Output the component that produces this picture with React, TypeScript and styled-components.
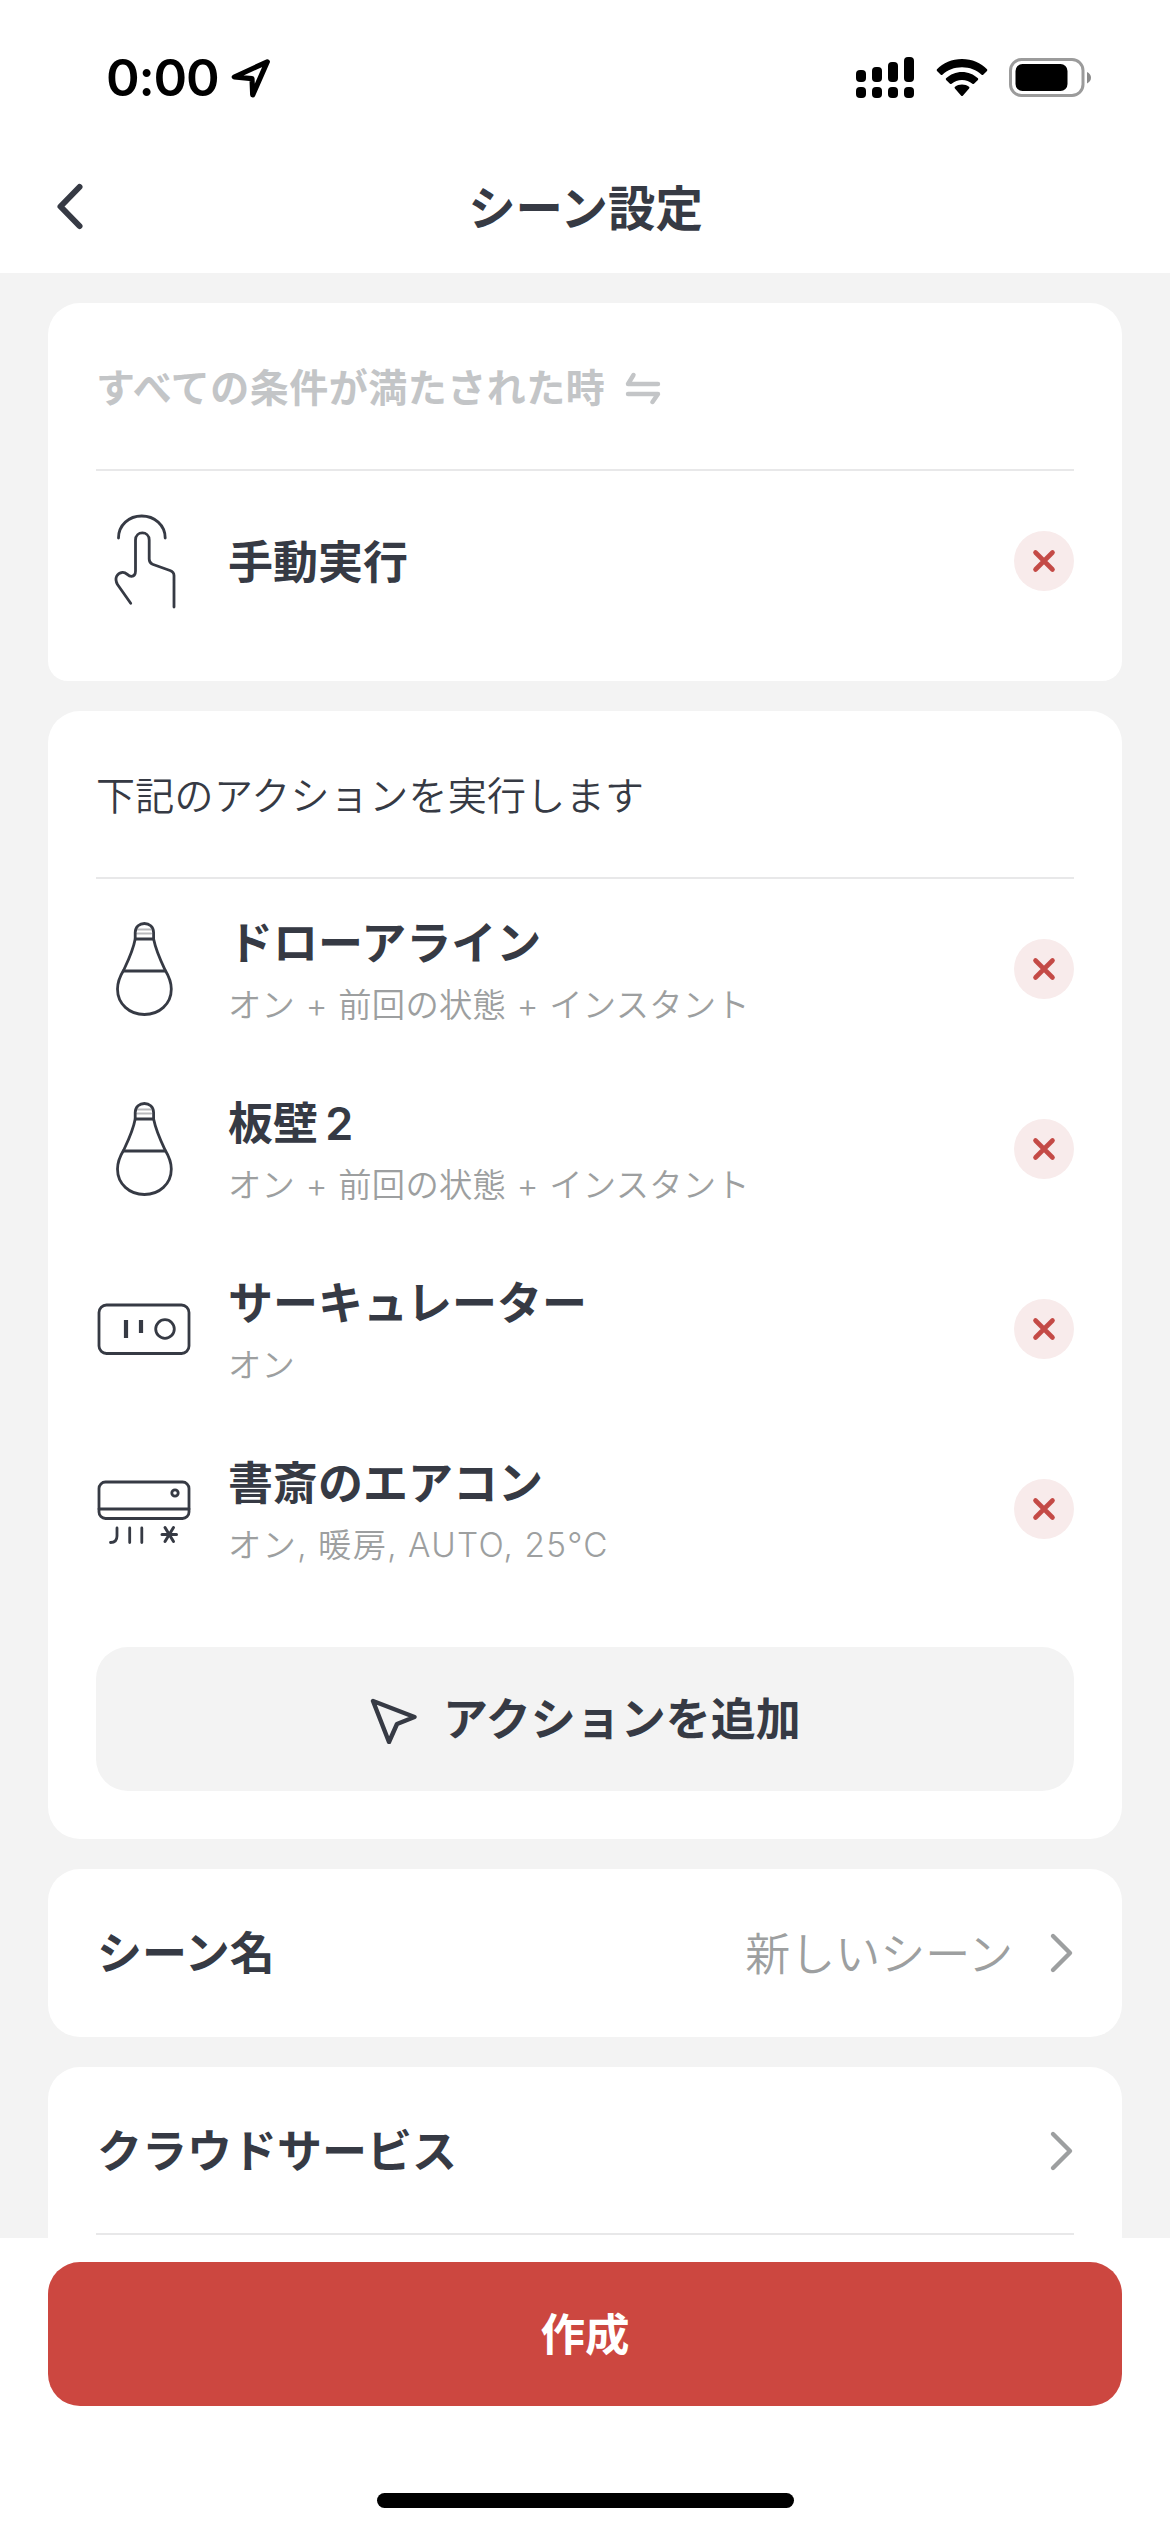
import React from "react";
import styled, { createGlobalStyle } from "styled-components";

const ink = "#363a44";
const muted = "#9d9fa0";
const canvas = "#f3f3f3";

const GlobalStyle = createGlobalStyle`
  * { box-sizing: border-box; }
  body {
    margin: 0;
    background: #fff;
    font-family: Inter, "Noto Sans CJK JP", sans-serif;
    color: ${ink};
  }
  button { font-family: inherit; border: 0; padding: 0; color: inherit; }
  svg { display: block; flex: none; }
`;

const Screen = styled.div`
  width: 1170px;
  height: 2532px;
  display: flex;
  flex-direction: column;
  overflow: hidden;
  background: #fff;
`;

const StatusBar = styled.header`
  height: 141px;
  flex: none;
  display: flex;
  align-items: center;
  justify-content: space-between;
  padding: 14px 78px 0 106px;
  color: #000;
`;

const StatusGroup = styled.div<{ $gap: number }>`
  display: flex;
  align-items: center;
  gap: ${(p) => p.$gap}px;
`;

const Clock = styled.span`
  font-size: 51px;
  font-weight: 600;
  line-height: 60px;
  width: 112px;
  white-space: nowrap;
  letter-spacing: -1.2px;
`;

const NavBar = styled.nav`
  height: 132px;
  flex: none;
  display: grid;
  grid-template-columns: 120px 1fr 120px;
  align-items: center;
`;

const BackButton = styled.button`
  background: none;
  padding-left: 54px;
`;

const Title = styled.h1`
  margin: 0;
  padding: 3px 0 0 1px;
  text-align: center;
  font-size: 47.4px;
  line-height: 70px;
  font-weight: 600;
`;

const Content = styled.main`
  flex: 1;
  min-height: 0;
  overflow: hidden;
  display: flex;
  flex-direction: column;
  gap: 30px;
  padding: 30px 48px 0;
  background: ${canvas};
`;

const Card = styled.section<{ $bottom?: number; $radius?: string }>`
  flex: none;
  background: #fff;
  border-radius: ${(p) => p.$radius ?? "32px"};
  padding: 0 48px ${(p) => p.$bottom ?? 0}px;
`;

const CardHeader = styled.div<{ $dim?: boolean }>`
  height: 168px;
  display: flex;
  align-items: center;
  gap: 19px;
  padding-top: 3px;
  border-bottom: 2px solid #e8e8e9;
  font-size: 39px;
  line-height: 58px;
  letter-spacing: ${(p) => (p.$dim ? 0.5 : 0.3)}px;
  font-weight: ${(p) => (p.$dim ? 600 : 350)};
  color: ${(p) => (p.$dim ? "#c3c5c7" : ink)};
`;

const Row = styled.div`
  height: 180px;
  display: flex;
  align-items: center;
  gap: 36px;
`;

const RowText = styled.div`
  flex: 1;
  display: flex;
  flex-direction: column;
  gap: 7px;
  padding-top: 3px;
`;

const RowTitle = styled.span`
  font-size: 45px;
  line-height: 62px;
  font-weight: 600;
  word-spacing: -4px;
`;

const RowDetail = styled.span<{ $tracking: number; $wordGap: number }>`
  font-size: 33.3px;
  line-height: 46px;
  font-weight: 350;
  letter-spacing: ${(p) => p.$tracking}px;
  word-spacing: ${(p) => p.$wordGap}px;
  color: ${muted};
`;

const RemoveButton = styled.button`
  width: 60px;
  height: 60px;
  border-radius: 50%;
  display: grid;
  place-items: center;
  background: #f8ebeb;
`;

const AddButton = styled.button`
  width: 100%;
  height: 144px;
  margin-top: 48px;
  border-radius: 32px;
  display: flex;
  align-items: center;
  justify-content: center;
  gap: 24px;
  background: ${canvas};
  font-size: 45px;
  font-weight: 600;
`;

const ButtonLabel = styled.span`
  line-height: 66px;
  padding-top: 2px;
`;

const SettingRow = styled.div<{ $divided?: boolean }>`
  height: 168px;
  display: flex;
  align-items: center;
  justify-content: space-between;
  padding-top: ${(p) => (p.$divided ? 2 : 0)}px;
  font-size: 45px;
  line-height: 64px;
  border-bottom: ${(p) => (p.$divided ? "2px solid #e8e8e9" : "0")};
`;

const SettingLabel = styled.span`
  padding: 2px 0 0 1px;
  font-weight: 600;
`;

const SettingValue = styled.span`
  display: flex;
  align-items: center;
  gap: 35px;
  font-weight: 350;
  color: ${muted};
`;

const ValueText = styled.span`
  padding-top: 3px;
`;

const Footer = styled.footer`
  height: 294px;
  flex: none;
  display: flex;
  flex-direction: column;
  align-items: center;
  justify-content: space-between;
  padding: 24px 48px;
  background: #fff;
`;

const CreateButton = styled.button`
  width: 100%;
  height: 144px;
  border-radius: 32px;
  display: flex;
  align-items: center;
  justify-content: center;
  background: #cc4740;
  color: #fff;
  font-size: 44.5px;
  font-weight: 600;
`;

const HomeIndicator = styled.div`
  width: 417px;
  height: 15px;
  border-radius: 8px;
  background: #000;
`;

const LocationIcon = () => (
  <svg width="42" height="42" viewBox="0 0 42 42" fill="none" stroke="currentColor" strokeWidth="5.200" strokeLinecap="round" strokeLinejoin="round">
    <path d="M37.300 4.800 4.300 20 22 21.700 22.700 38Z" />
  </svg>
);

const SignalIcon = () => (
  <svg width="59" height="41" viewBox="0 0 59 41" fill="currentColor">
    {[13, 10, 5, 0].map((top, i) => (
      <g key={top}>
        <rect x={i * 16} y={top} width="10" height={25 - top} rx="4" />
        <rect x={i * 16} y="30" width="10" height="11" rx="4" />
      </g>
    ))}
  </svg>
);

const WifiIcon = () => (
  <svg width="52" height="38" viewBox="0 0 52 38" fill="currentColor">
    <path d="M26 0C16 0 7 4 1 10.300q-.7.8 0 1.600l3.800 3.800q.8.7 1.600 0C11.500 11 18.300 8.300 26 8.300s14.500 2.700 19.600 7.400q.8.7 1.600 0l3.800-3.800q.7-.8 0-1.600C45 4 36 0 26 0Z" />
    <path d="M26 13c-6 0-11.800 2.400-15.900 6.300q-.8.800 0 1.600l3.900 3.800q.8.700 1.600.1C18.400 22.600 22 21 26 21s7.600 1.600 10.400 3.800q.8.600 1.600-.1l3.900-3.800q.8-.8 0-1.600C37.800 15.400 32 13 26 13Z" />
    <path d="M26 25.500c-2.700 0-5 .8-7 2.300q-.9.800-.1 1.600l6.300 7.300q.8.700 1.600 0l6.300-7.300q.8-.8-.1-1.600c-2-1.500-4.300-2.300-7-2.300Z" />
  </svg>
);

const BatteryIcon = () => (
  <svg width="83" height="39" viewBox="0 0 83 39" fill="none">
    <rect x="1.500" y="1.500" width="72.500" height="36" rx="11" stroke="#9b9b9b" strokeWidth="3" />
    <rect x="6.500" y="6" width="52" height="27" rx="7" fill="#000" />
    <path d="M78 14q4 2 4 5.700t-4 5.700Z" fill="#8a8a8a" />
  </svg>
);

const BackIcon = () => (
  <svg width="32" height="50" viewBox="0 0 32 50" fill="none" stroke={ink} strokeWidth="6" strokeLinecap="round" strokeLinejoin="round">
    <path d="M25.500 5 6.500 24.500 25.500 44" />
  </svg>
);

const SwapIcon = () => (
  <svg width="38" height="34" viewBox="0 0 38 34" fill="none" stroke="#c3c5c7" strokeWidth="4.400" strokeLinecap="round" strokeLinejoin="round">
    <path d="M34 13H4L9.500 4" />
    <path d="M4 23H34L28.500 31" />
  </svg>
);

const ChevronIcon = () => (
  <svg width="26" height="44" viewBox="0 0 26 44" fill="none" stroke={muted} strokeWidth="4.400" strokeLinecap="round" strokeLinejoin="round">
    <path d="M5 5 22 22 5 39" />
  </svg>
);

const CloseIcon = () => (
  <svg width="24" height="24" viewBox="0 0 24 24" stroke="#c44a46" strokeWidth="4.600" strokeLinecap="round">
    <path d="M3.500 3.500 20.500 20.500M20.500 3.500 3.500 20.500" />
  </svg>
);

const CursorIcon = () => (
  <svg width="50" height="50" viewBox="0 0 50 50" fill="none" stroke={ink} strokeWidth="4.400" strokeLinejoin="round">
    <path d="M4 7 45.500 23 28 30 20 48Z" />
  </svg>
);

const DeviceSvg = ({ children }: { children: React.ReactNode }) => (
  <svg width="96" height="96" viewBox="0 0 96 96" fill="none" stroke={ink} strokeWidth="2.800" strokeLinecap="round" strokeLinejoin="round">
    {children}
  </svg>
);

const TapIcon = () => (
  <DeviceSvg>
    <path d="M22.500 25C22.500 12 33 3 45.700 3S69.200 12 69.200 25" />
    <path d="M34.700 90.300 21.500 71.500C18 65 21 60 26.500 59.300C31 59 31.500 63.500 35.500 63.300Q39.500 63 39.500 58V27C39.500 17.500 53.200 17.500 53.200 27V46Q53.200 50 56.500 51.200L74 57.500Q78 59 78 62.500V94" />
  </DeviceSvg>
);

const BulbIcon = () => (
  <DeviceSvg>
    <path d="M41.500 8.500H54.500M41 12.500H55" stroke="#b9babd" strokeWidth="2" />
    <path d="M39.200 18V11.500C39.200 -.5 57.600 -.5 57.600 11.500V18Z" />
    <path d="M39.200 18C37 30 32 40 27.700 49C23.500 56 21.500 61 21.500 68C21.500 83 33.500 93.500 48.400 93.500S75.300 83 75.300 68C75.300 61 73.300 56 69.100 49C64.800 40 60 30 57.600 18" />
    <path d="M27.700 50H69.100" />
  </DeviceSvg>
);

const PlugIcon = () => (
  <DeviceSvg>
    <rect x="3" y="24" width="90" height="48.500" rx="7.500" />
    <path d="M30 39V57M45 39V52" strokeWidth="4.200" strokeLinecap="butt" />
    <circle cx="69" cy="48" r="9.300" />
  </DeviceSvg>
);

const AirconIcon = () => (
  <DeviceSvg>
    <rect x="3" y="21" width="90" height="36.500" rx="6.500" />
    <path d="M3 48H93" />
    <circle cx="79" cy="32" r="3.200" />
    <path d="M21 67V75Q21 81.500 14.500 81.500M33.700 67V81.500M45.800 67V81.500" />
    <path d="M66 73.500H80.500M69 66.500 77.500 80.500M77.500 66.500 69 80.500" strokeWidth="3" />
  </DeviceSvg>
);

const Remove = () => (
  <RemoveButton aria-label="削除">
    <CloseIcon />
  </RemoveButton>
);

const actions = [
  { Icon: BulbIcon, name: "ドローアライン", detail: "オン + 前回の状態 + インスタント", tracking: 0.25, wordGap: 1 },
  { Icon: BulbIcon, name: "板壁 2", detail: "オン + 前回の状態 + インスタント", tracking: 0.25, wordGap: 1 },
  { Icon: PlugIcon, name: "サーキュレーター", detail: "オン", tracking: 0.25, wordGap: 1 },
  { Icon: AirconIcon, name: "書斎のエアコン", detail: "オン, 暖房, AUTO, 25°C", tracking: 1.3, wordGap: -0.5 },
];

export default function App() {
  return (
    <Screen lang="ja">
      <GlobalStyle />
      <StatusBar>
        <StatusGroup $gap={12}>
          <Clock>0:00</Clock>
          <LocationIcon />
        </StatusGroup>
        <StatusGroup $gap={21}>
          <SignalIcon />
          <WifiIcon />
          <BatteryIcon />
        </StatusGroup>
      </StatusBar>
      <NavBar>
        <BackButton aria-label="戻る">
          <BackIcon />
        </BackButton>
        <Title>シーン設定</Title>
      </NavBar>
      <Content>
        <Card $bottom={30} $radius="32px 32px 20px 20px">
          <CardHeader $dim>
            すべての条件が満たされた時
            <SwapIcon />
          </CardHeader>
          <Row>
            <TapIcon />
            <RowText>
              <RowTitle>手動実行</RowTitle>
            </RowText>
            <Remove />
          </Row>
        </Card>
        <Card $bottom={48}>
          <CardHeader>下記のアクションを実行します</CardHeader>
          {actions.map(({ Icon, name, detail, tracking, wordGap }) => (
            <Row key={name}>
              <Icon />
              <RowText>
                <RowTitle>{name}</RowTitle>
                <RowDetail $tracking={tracking} $wordGap={wordGap}>
                  {detail}
                </RowDetail>
              </RowText>
              <Remove />
            </Row>
          ))}
          <AddButton>
            <CursorIcon />
            <ButtonLabel>アクションを追加</ButtonLabel>
          </AddButton>
        </Card>
        <Card>
          <SettingRow>
            <SettingLabel>シーン名</SettingLabel>
            <SettingValue>
              <ValueText>新しいシーン</ValueText>
              <ChevronIcon />
            </SettingValue>
          </SettingRow>
        </Card>
        <Card $bottom={168}>
          <SettingRow $divided>
            <SettingLabel>クラウドサービス</SettingLabel>
            <ChevronIcon />
          </SettingRow>
        </Card>
      </Content>
      <Footer>
        <CreateButton>
          <ButtonLabel>作成</ButtonLabel>
        </CreateButton>
        <HomeIndicator />
      </Footer>
    </Screen>
  );
}
